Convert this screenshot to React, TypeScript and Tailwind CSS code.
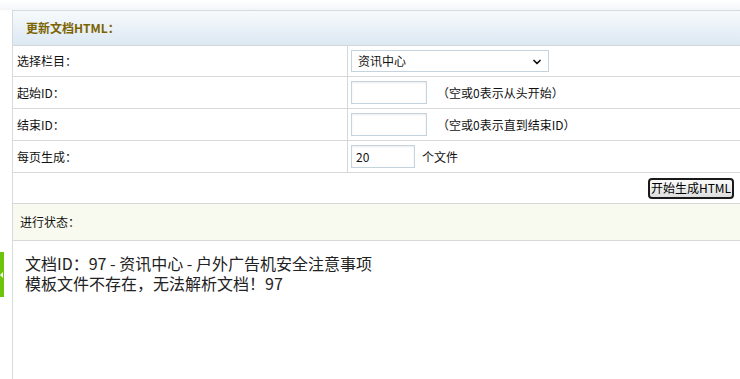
import { ChevronDown } from 'lucide-react';

const cell = 'flex items-center border-b border-[#d7d7d7]';
const inputBox =
  'h-[23px] border border-[#c5d3de] bg-white px-1 text-[12px] shadow-[inset_0_1px_2px_rgba(0,0,0,0.08)] outline-none';

function FormRow({ label, children, height }: { label: string; children: React.ReactNode; height: string }) {
  return (
    <div className={`${cell} ${height} items-stretch`}>
      <div className="flex w-[335px] items-center border-r border-[#d7d7d7] pl-[4px]">{label}</div>
      <div className="flex flex-1 items-center gap-[10px] pl-[3px]">{children}</div>
    </div>
  );
}

export default function App() {
  return (
    <div className="relative h-[379px] w-[740px] overflow-hidden bg-white font-['Noto_Sans_CJK_SC',sans-serif] text-[12px] text-[#111]">
      <div className="h-[10px] bg-[linear-gradient(180deg,#ffffff,#f3f6f8)]" />

      <div className="ml-[12px] w-[760px] border-l border-t border-[#d5dade]">
        <div className="flex h-[35px] items-center border-b border-[#d0d6db] bg-[linear-gradient(180deg,#f7fafc_0%,#dce8f2_100%)] pl-[13px] font-bold text-[#7b6400]">
          更新文档HTML：
        </div>

        <FormRow label="选择栏目：" height="h-[31px]">
          <div className="relative flex h-[22px] w-[198px] items-center border border-[#c5d3de] bg-white pl-[6px]">
            资讯中心
            <ChevronDown className="absolute right-[5px] top-[5px] h-[12px] w-[12px]" strokeWidth={3.5} />
          </div>
        </FormRow>

        <FormRow label="起始ID：" height="h-[32px]">
          <div className={`${inputBox} w-[76px]`} />
          <span>（空或0表示从头开始）</span>
        </FormRow>

        <FormRow label="结束ID：" height="h-[32px]">
          <div className={`${inputBox} w-[76px]`} />
          <span>（空或0表示直到结束ID）</span>
        </FormRow>

        <FormRow label="每页生成：" height="h-[32px]">
          <div className={`${inputBox} flex w-[64px] items-center pl-[4px]`}>20</div>
          <span className="-ml-[3px]">个文件</span>
        </FormRow>

        <div className={`${cell} h-[31px]`}>
          <button
            type="button"
            className="ml-[635px] h-[21px] w-[86px] rounded-[4px] border-2 border-[#1a1a1a] bg-[linear-gradient(180deg,#fafafa,#dedede)] text-[12px] leading-none text-black"
          >
            开始生成HTML
          </button>
        </div>

        <div className={`${cell} h-[37px] bg-[#f8faef] pl-[7px]`}>进行状态：</div>

        <div className="h-[200px] pl-[12px] pt-[12px] text-[16px] leading-[20px] text-[#222]">
          <p>文档ID：97 - 资讯中心 - 户外广告机安全注意事项</p>
          <p>模板文件不存在，无法解析文档！97</p>
        </div>
      </div>

      <div className="absolute left-0 top-[252px] flex h-[45px] w-[4px] items-center bg-[#6cc40c]">
        <div className="h-0 w-0 border-y-[3px] border-r-[3px] border-y-transparent border-r-white" />
      </div>
    </div>
  );
}
